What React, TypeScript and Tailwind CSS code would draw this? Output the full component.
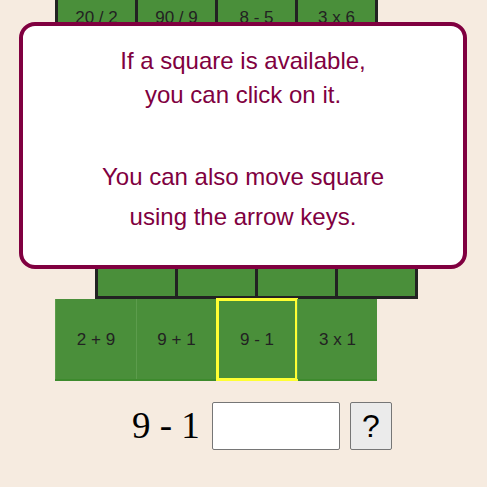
import { useState } from "react";

type Row = { offset: "left" | "right"; labels: string[] };

// rows above the active one, top to bottom (mostly hidden under the hint box)
const lockedRows: Row[] = [
  { offset: "left", labels: ["20 / 2", "90 / 9", "8 - 5", "3 x 6"] },
  { offset: "right", labels: ["", "", "", ""] },
  { offset: "left", labels: ["", "", "", ""] },
  { offset: "right", labels: ["", "", "", ""] },
];

const activeRow = [
  { label: "2 + 9", w: "w-[81px]" },
  { label: "9 + 1", w: "w-[80px]" },
  { label: "9 - 1", w: "w-[81px]" },
  { label: "3 x 1", w: "w-[80px]" },
];

export default function App() {
  const [selected] = useState(2);
  const [answer, setAnswer] = useState("");

  return (
    <div className="relative flex min-h-screen flex-col overflow-hidden bg-[#f6ebe0] font-['Liberation_Sans',Arial,sans-serif]">
      <div className="-mt-[21px] flex flex-col">
        {lockedRows.map((row, i) => (
          <div key={i} className={row.offset === "left" ? "flex pl-[55px]" : "flex pl-[95px]"}>
            {row.labels.map((label, j) => (
              <div
                key={j}
                className={
                  j === row.labels.length - 1
                    ? "flex h-[80px] w-[83px] items-center justify-center border-b-[3px] border-l-[3px] border-r-[3px] border-[#222] bg-[#4a8f3a] text-[17px] text-[#222]"
                    : "flex h-[80px] w-[80px] items-center justify-center border-b-[3px] border-l-[3px] border-[#222] bg-[#4a8f3a] text-[17px] text-[#222]"
                }
              >
                {label}
              </div>
            ))}
          </div>
        ))}

        <div className="flex pl-[55px]">
          <div className="flex border-b-2 border-[#3d8a2d]">
            {activeRow.map((cell, j) => (
              <div
                key={cell.label}
                className={`relative flex h-[80px] ${cell.w} items-center justify-center border-l border-[#5c9c4c] bg-[#4a8f3a] pt-[2px] text-[17px] text-[#222]`}
              >
                {cell.label}
                {j === selected && (
                  <div className="absolute -inset-x-[1px] -top-[1px] -bottom-[2px] border-[3px] border-[#ffff33]" />
                )}
              </div>
            ))}
          </div>
        </div>
      </div>

      <div className="mt-[21px] flex items-center pl-[132px]">
        <span className="font-['Liberation_Serif','Times_New_Roman',serif] text-[37px] leading-[40px] text-black">
          9 - 1
        </span>
        <input
          value={answer}
          onChange={(e) => setAnswer(e.target.value)}
          className="ml-[12px] h-[48px] w-[128px] rounded-[2px] border border-[#767676] bg-white px-2 text-[24px] outline-none"
        />
        <button
          type="button"
          className="ml-[10px] flex h-[48px] w-[42px] items-center justify-center rounded-[2px] border border-[#767676] bg-[#ebebeb] text-[32px] leading-none text-black"
        >
          ?
        </button>
      </div>

      {/* hint box over the board */}
      <div className="absolute left-[19px] top-[22px] w-[448px] rounded-[16px] border-4 border-[#800040] bg-white px-4 pt-[18px] pb-[28px] text-center text-[24px] text-[#800040]">
        <p className="leading-[34px]">
          If a square is available,
          <br />
          you can click on it.
        </p>
        <p className="mt-[45px] leading-[40px]">
          You can also move square
          <br />
          using the arrow keys.
        </p>
      </div>
    </div>
  );
}
